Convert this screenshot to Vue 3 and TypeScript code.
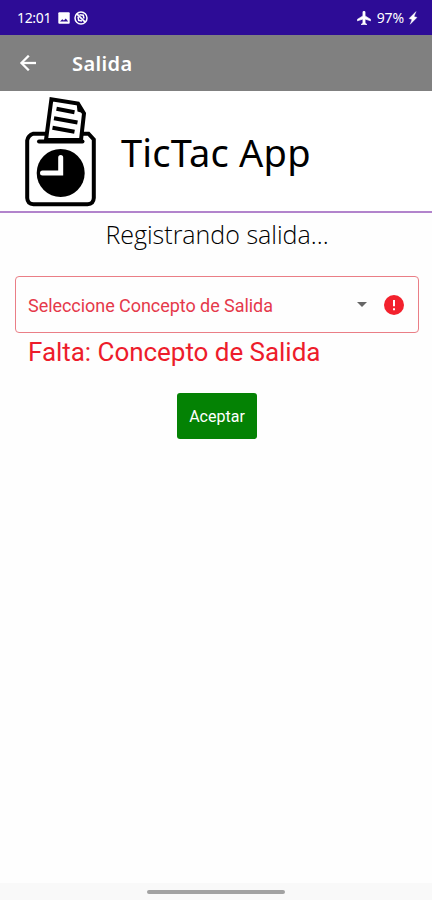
<script setup lang="ts">
import { ref } from 'vue'

const time = ref('12:01')
const battery = ref('97%')
const concept = ref('Seleccione Concepto de Salida')
const error = ref('Falta: Concepto de Salida')
</script>

<template>
  <div class="screen">
    <div class="status">
      <span class="time">{{ time }}</span>
      <svg class="photo" viewBox="0 0 12 12" width="12" height="12">
        <rect x="0.3" y="0.3" width="11.4" height="11.4" rx="1" fill="#fff" />
        <path d="M2 9.5 4.3 7.2 5.9 8.4 7.8 6.5 10.2 9.5Z" fill="#2d0c96" />
      </svg>
      <svg class="blocked" viewBox="0 0 14 14" width="14" height="14" fill="none" stroke="#fff">
        <circle cx="7" cy="7" r="6" stroke-width="1.5" />
        <path d="M2.8 2.8 11.2 11.2" stroke-width="1.7" />
        <path d="M5.5 3.8 9.2 4.2 10 7.500M4 5.6 4.7 9.3 8 10" stroke-width="1.5" />
      </svg>
      <span class="fill"></span>
      <svg class="plane" viewBox="2 2 19 20" width="14" height="14">
        <path fill="#fff" stroke="#fff" stroke-width="1" d="M21 16v-2l-8-5V3.500C13 2.670 12.330 2 11.500 2S10 2.670 10 3.500V9l-8 5v2l8-2.500V19l-2 1.500V22l3.500-1 3.500 1v-1.500L13 19v-5.500l8 2.500z" />
      </svg>
      <span class="battery">{{ battery }}</span>
      <svg class="bolt" viewBox="0 0 9 14" width="10" height="14">
        <path fill="#fff" stroke="#fff" stroke-width=".4" d="M7.500.6.6 7.500 3.500 8.400 1.700 13.300 8.500 6.400 5.500 5.600Z" />
      </svg>
    </div>

    <header class="toolbar">
      <svg viewBox="4 4 16 16" width="16" height="16">
        <path fill="#fff" stroke="#fff" stroke-width=".3" d="M20 11H7.830l5.590-5.590L12 4l-8 8 8 8 1.410-1.410L7.830 13H20v-2z" />
      </svg>
      <h1>Salida</h1>
    </header>

    <div class="brand">
      <svg class="logo" viewBox="0 0 74 112" width="74" height="112">
        <path d="M9.500 38.700H64.500L69.800 44.500V103Q69.500 109 63.500 109.300H9.500Q3.500 109 3.200 103V45.500Q4 40.500 9.500 38.700Z" fill="#fff" stroke="#000" stroke-width="4" />
        <path d="M22 45 27.400 4.200 54 8.500 60 18.500 57 45Z" fill="#fff" stroke="#000" stroke-width="4" />
        <path d="M52.500 7 53.500 16.500 60.500 18.500" fill="#000" />
        <path d="M32.500 13.800 50.500 17.200M30 23.300 53.500 27.500M28.500 32.700 50.500 36.800" stroke="#000" stroke-width="4" />
        <path d="M15 46.500H58.500" stroke="#000" stroke-width="4" stroke-linecap="round" />
        <circle cx="36.700" cy="78" r="24" fill="#000" />
        <path d="M36.700 62.500V78H18.500" fill="none" stroke="#fff" stroke-width="5" stroke-linecap="round" />
      </svg>
      <span class="name">TicTac App</span>
    </div>

    <main>
      <p class="heading">Registrando salida...</p>
      <div class="select">
        <span class="label">{{ concept }}</span>
        <svg class="caret" viewBox="0 0 10 5" width="10" height="5"><path d="M0 0H10L5 5Z" fill="#666" /></svg>
        <svg viewBox="0 0 20 20" width="20" height="20">
          <circle cx="10" cy="10" r="10" fill="#f3212d" />
          <path d="M10 5V11.200M10 13.200V15.200" stroke="#fff" stroke-width="2" />
        </svg>
      </div>
      <p class="error">{{ error }}</p>
      <button type="button">Aceptar</button>
    </main>

    <footer><span class="handle"></span></footer>
  </div>
</template>

<style>
body {
  margin: 0;
}
</style>

<style scoped>
.screen {
  width: 432px;
  height: 900px;
  display: flex;
  flex-direction: column;
  overflow: hidden;
  background: #fefefe;
  font-family: Roboto, sans-serif;
}
.screen > * {
  flex-shrink: 0;
  box-sizing: border-box;
}
span,
p,
h1 {
  white-space: nowrap;
}
.status {
  height: 35px;
  padding: 1px 14px 0 17px;
  display: flex;
  align-items: center;
  background: #2d0c96;
  color: #fff;
  font: 14px/20px "Noto Sans", sans-serif;
}
.time {
  width: 41px;
  letter-spacing: -0.35px;
}
.blocked {
  margin-left: 4px;
}
.fill {
  flex: 1;
}
.battery {
  margin: 0 4px 0 6px;
  letter-spacing: -0.1px;
}
.toolbar {
  height: 56px;
  padding: 0 20px;
  display: flex;
  align-items: center;
  gap: 36px;
  background: #808080;
  color: #fff;
}
h1 {
  margin: 1px 0 0;
  font: 600 20px/28px "Noto Sans", sans-serif;
  letter-spacing: 0.4px;
}
.brand {
  height: 122px;
  padding: 4px 24px 0;
  display: flex;
  border-bottom: 2px solid #b284cc;
  background: #fff;
}
.name {
  margin: 31px 0 0 23px;
  color: #000;
  font: 38px/52px "Noto Sans", sans-serif;
  letter-spacing: 0.2px;
}
main {
  flex: 1;
  display: flex;
  flex-direction: column;
}
.heading {
  margin: 4px 0 0 2px;
  color: #000;
  text-align: center;
  font: 300 25px/34px "Open Sans", sans-serif;
}
.select {
  height: 57px;
  margin: 25px 13px 0 15px;
  padding: 0 14px 0 12px;
  display: flex;
  align-items: center;
  box-sizing: border-box;
  border: 1.500px solid #ea7e86;
  border-radius: 4px;
}
.label {
  flex: 1;
  padding-top: 2px;
  color: #e5394a;
  font-size: 18px;
  line-height: 24px;
  letter-spacing: -0.05px;
}
.caret {
  margin-right: 17px;
}
.error {
  margin: 3px 0 0 28px;
  color: #ed1c2b;
  font-size: 26px;
  line-height: 32px;
  letter-spacing: -0.04px;
}
button {
  align-self: center;
  width: 80px;
  height: 46px;
  margin: 25px 0 0 2px;
  padding: 2px 0 0;
  border: 0;
  border-radius: 3px;
  background: #048204;
  color: #fff;
  font: 400 16px/20px Roboto, sans-serif;
}
footer {
  height: 17px;
  display: flex;
  justify-content: center;
  padding-top: 7px;
  background: #f9f9f9;
}
.handle {
  width: 138px;
  height: 4px;
  border-radius: 2px;
  background: #a2a2a2;
}
</style>
